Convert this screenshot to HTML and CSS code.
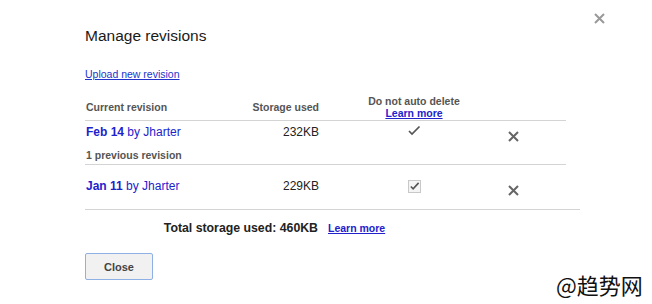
FILE: index.html
```html
<!DOCTYPE html>
<html lang="en">

<head>
    <meta charset="UTF-8">
    <title>Manage revisions</title>
    <link rel="stylesheet" href="styles.css">
</head>

<body>
    <div class="dialog">
        <span class="dialog-close">
            <svg width="11" height="11" viewBox="0 0 11 11"><path d="M1 1L10 10M10 1L1 10" stroke="#999" stroke-width="2"/></svg>
        </span>
        <h1 class="title">Manage revisions</h1>
        <a class="upload" href="#">Upload new revision</a>

        <div class="rev-head">
            <div class="col-name">Current revision</div>
            <div class="col-size">Storage used</div>
            <div class="col-keep">Do not auto delete<br><a href="#" class="bold-link">Learn more</a></div>
            <div class="col-del"></div>
        </div>

        <div class="rev-row first">
            <div class="col-name">
                <div class="rev-name"><b>Feb 14</b> by Jharter</div>
                <div class="rev-prev">1 previous revision</div>
            </div>
            <div class="col-size size">232KB</div>
            <div class="col-keep icon-cell">
                <svg width="14" height="11" viewBox="0 0 14 11"><path d="M2 6L5 9L12.5 1.5" fill="none" stroke="#555" stroke-width="1.7"/></svg>
            </div>
            <div class="col-del"><span class="del-x"><svg width="11" height="11" viewBox="0 0 11 11"><path d="M1 1L10 10M10 1L1 10" stroke="#666" stroke-width="2"/></svg></span></div>
        </div>

        <div class="rev-row last">
            <div class="col-name">
                <div class="rev-name"><b>Jan 11</b> by Jharter</div>
            </div>
            <div class="col-size size">229KB</div>
            <div class="col-keep icon-cell">
                <span class="checkbox"><svg width="12" height="11" viewBox="0 0 12 11"><path d="M2 5.5L4.5 8L10.5 1.5" fill="none" stroke="#555" stroke-width="1.8"/></svg></span>
            </div>
            <div class="col-del"><span class="del-x"><svg width="11" height="11" viewBox="0 0 11 11"><path d="M1 1L10 10M10 1L1 10" stroke="#666" stroke-width="2"/></svg></span></div>
        </div>

        <div class="total">
            <span class="total-text">Total storage used: 460KB</span>
            <a href="#" class="bold-link">Learn more</a>
        </div>

        <button class="btn-close">Close</button>
    </div>

    <div class="watermark">@趋势网</div>
</body>

</html>
```

FILE: styles.css
```css
* {
    margin: 0;
    padding: 0;
    box-sizing: border-box;
}

body {
    width: 652px;
    height: 304px;
    background: #fff;
    font-family: "Liberation Sans", Arial, sans-serif;
    color: #222;
    overflow: hidden;
    position: relative;
}

.dialog {
    padding-left: 85px;
    position: relative;
    height: 304px;
}

.dialog-close {
    position: absolute;
    left: 594px;
    top: 13px;
    display: flex;
}

.title {
    font-size: 15.5px;
    font-weight: normal;
    line-height: 20px;
    padding-top: 26px;
    color: #1a1a1a;
}

.upload {
    display: block;
    margin-top: 21px;
    font-size: 10.5px;
    line-height: 14px;
    color: #2233cc;
    width: max-content;
}

.bold-link {
    color: #2222cc;
    font-weight: bold;
    font-size: 10.5px;
}

/* revision table */

.rev-head,
.rev-row {
    display: flex;
    width: 481px;
    border-bottom: 1px solid #d4d4d4;
}

.rev-head {
    margin-top: 13px;
    padding: 1px 0;
    align-items: center;
    font-size: 10.5px;
    font-weight: bold;
    color: #555;
    line-height: 12px;
}

.col-name {
    width: 154px;
    padding-left: 1px;
}

.col-size {
    width: 80px;
    text-align: right;
}

.col-keep {
    width: 190px;
    text-align: center;
}

.icon-cell {
    display: flex;
    justify-content: center;
}

.col-del {
    width: 57px;
}

.rev-row {
    align-items: flex-start;
}

.rev-row.first {
    padding: 4px 0 3px;
}

.rev-row.last {
    width: 495px;
    padding: 14px 0 13px;
}

.rev-name {
    font-size: 12px;
    line-height: 14px;
    color: #2222cc;
}

.size {
    font-size: 12px;
    line-height: 14px;
    color: #222;
}

.rev-prev {
    margin-top: 10px;
    font-size: 10.5px;
    font-weight: bold;
    line-height: 12px;
    color: #555;
}

.checkbox {
    display: flex;
    align-items: center;
    justify-content: center;
    width: 13px;
    height: 13px;
    margin-top: 1px;
    border: 1px solid #c8c8c8;
    background: #f4f4f4;
}

.del-x {
    display: flex;
    margin-top: 6px;
    margin-left: -1px;
}

.total {
    display: flex;
    align-items: center;
    margin-top: 11px;
    line-height: 14px;
}

.total-text {
    width: 233px;
    text-align: right;
    font-size: 12.3px;
    font-weight: bold;
    color: #222;
    margin-right: 10px;
}

.btn-close {
    display: block;
    margin-top: 18px;
    width: 68px;
    height: 27px;
    border: 1px solid #8fb0e4;
    border-radius: 2px;
    background: #f1f1f1;
    font-family: "Liberation Sans", Arial, sans-serif;
    font-size: 11px;
    font-weight: bold;
    color: #444;
}

.watermark {
    position: absolute;
    left: 556px;
    top: 270px;
    font-family: "Noto Sans CJK SC", sans-serif;
    font-size: 22px;
    line-height: 28px;
    color: #111;
}
```
